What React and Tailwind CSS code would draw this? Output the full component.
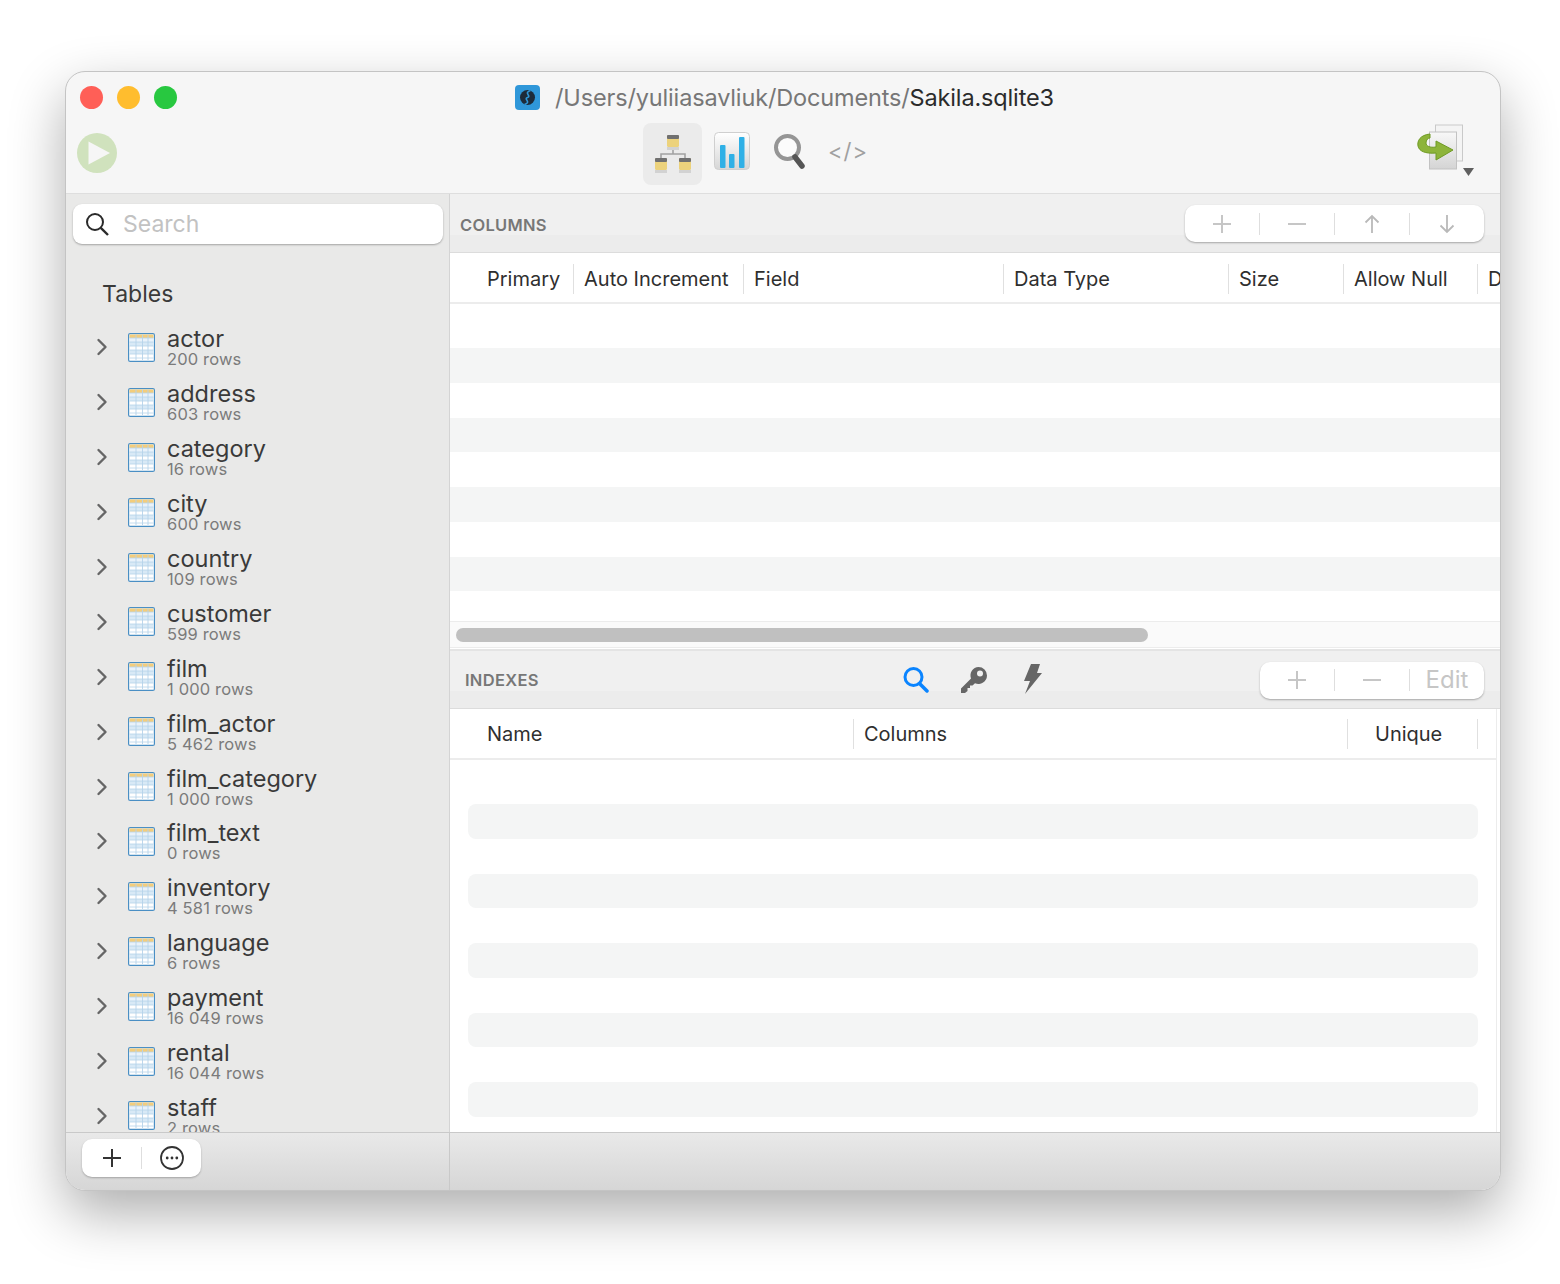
import React from "react";

const tables = [
  ["actor", "200 rows"], ["address", "603 rows"], ["category", "16 rows"], ["city", "600 rows"],
  ["country", "109 rows"], ["customer", "599 rows"], ["film", "1 000 rows"], ["film_actor", "5 462 rows"],
  ["film_category", "1 000 rows"], ["film_text", "0 rows"], ["inventory", "4 581 rows"], ["language", "6 rows"],
  ["payment", "16 049 rows"], ["rental", "16 044 rows"], ["staff", "2 rows"],
];

function TableIcon() {
  return (
    <svg width="27" height="29" viewBox="0 0 27 29" className="shrink-0">
      <rect x="0.6" y="0.6" width="25.8" height="27.8" rx="1.5" fill="#fff" stroke="#4a8fc4" strokeWidth="1.2" />
      <rect x="1.5" y="1.5" width="24" height="3.5" fill="#f3cd7c" />
      <rect x="1.5" y="9" width="24" height="4" fill="#d8e9f6" />
      <rect x="1.5" y="17" width="24" height="4" fill="#d8e9f6" />
      <rect x="1.5" y="5" width="24" height="4" fill="#e9f2fa" />
      <path d="M1.5 5H25.5M1.5 9H25.5M1.5 13H25.5M1.5 17H25.5M1.5 21H25.5M1.5 25H25.5" stroke="#b5d3ea" strokeWidth="0.8" />
      <path d="M8 2V27M14.5 2V27M20 2V27" stroke="#b5d3ea" strokeWidth="0.9" />
    </svg>
  );
}

function Chevron() {
  return (
    <svg width="12" height="18" viewBox="0 0 12 18" className="shrink-0">
      <path d="M2.5 2L9.5 9L2.5 16" fill="none" stroke="#666" strokeWidth="2.4" strokeLinecap="round" strokeLinejoin="round" />
    </svg>
  );
}

function Sep() {
  return <span className="h-[22px] w-px shrink-0 bg-[#dedede]" />;
}

function Plus({ color = "#c6c6c6" }) {
  return (
    <svg width="20" height="20" viewBox="0 0 20 20">
      <path d="M10 1V19M1 10H19" stroke={color} strokeWidth="2" />
    </svg>
  );
}

function Minus() {
  return (
    <svg width="20" height="20" viewBox="0 0 20 20">
      <path d="M1 10H19" stroke="#c6c6c6" strokeWidth="2" />
    </svg>
  );
}

function Arrow({ down }) {
  return (
    <svg width="16" height="20" viewBox="0 0 16 20" className={down ? "rotate-180" : ""}>
      <path d="M8 19V2M1.5 8.5L8 2L14.5 8.5" fill="none" stroke="#b9b9b9" strokeWidth="1.8" />
    </svg>
  );
}

function Head({ w, pl = 10, children, sep = true, className = "" }) {
  return (
    <div className={"flex h-full shrink-0 items-center " + className} style={{ width: w, paddingLeft: pl }}>
      <span className="text-[20px] whitespace-nowrap text-[#2f2f2f]">{children}</span>
      {sep && <span className="ml-auto h-[30px] w-px shrink-0 bg-[#e0e0e0]" />}
    </div>
  );
}

function SchemaIcon() {
  return (
    <svg width="38" height="40" viewBox="0 0 38 40">
      <path d="M19 12V20M7 27V20H31V27" fill="none" stroke="#a3a3a3" strokeWidth="1.6" />
      {[[13, 0], [1, 23], [25, 23]].map(([x, y]) => (
        <g key={x}>
          <rect x={x} y={y + 1} width="12" height="12" rx="1.5" fill="#ecd27c" />
          <rect x={x} y={y + 1} width="12" height="4" rx="1" fill="#707070" />
          <rect x={x} y={y + 13} width="12" height="3" fill="#d2d2d2" />
        </g>
      ))}
    </svg>
  );
}

function ChartIcon() {
  return (
    <svg width="36" height="40" viewBox="0 0 36 40">
      <defs>
        <linearGradient id="chartbg" x1="0" y1="0" x2="0" y2="1">
          <stop offset="0" stopColor="#ffffff" />
          <stop offset="1" stopColor="#d6d6d6" />
        </linearGradient>
      </defs>
      <rect x="0.5" y="0.5" width="35" height="37" rx="4" fill="url(#chartbg)" stroke="#cfcfcf" />
      <rect x="6" y="13" width="5.5" height="23" rx="1" fill="#2fb0e6" />
      <rect x="15" y="22" width="5.5" height="14" rx="1" fill="#2fb0e6" />
      <rect x="25" y="5" width="5.5" height="31" rx="1" fill="#2fb0e6" />
    </svg>
  );
}

function GlassIcon() {
  return (
    <svg width="32" height="36" viewBox="0 0 32 36">
      <circle cx="13.5" cy="13.5" r="11.5" fill="#fbfbfb" stroke="#959595" strokeWidth="4" />
      <path d="M21 23L28 32" stroke="#555" strokeWidth="5.5" strokeLinecap="round" />
    </svg>
  );
}

function ExportIcon() {
  return (
    <svg width="60" height="56" viewBox="0 0 60 56">
      <rect x="18.5" y="1" width="27" height="36" fill="#f4f4f4" stroke="#c9c9c9" />
      <defs>
        <linearGradient id="pagebg" x1="0" y1="0" x2="0" y2="1">
          <stop offset="0" stopColor="#f8f8f8" />
          <stop offset="1" stopColor="#d4d4d4" />
        </linearGradient>
      </defs>
      <rect x="12.5" y="8" width="27" height="37" fill="url(#pagebg)" stroke="#c2c2c2" />
      <path d="M13 10C3 11 0 17 1 22C2 27 8 30 19 29V36L36 26L19 17V23C13 24 9 22 9 19C9 16 11 14 13 14Z" fill="#8db43a" stroke="#6f9a25" strokeWidth="1" />
      <path d="M46 44H57L51.5 52Z" fill="#5f5f5f" />
    </svg>
  );
}

function PlayIcon() {
  return (
    <svg width="40" height="40" viewBox="0 0 40 40">
      <circle cx="20" cy="20" r="20" fill="#d0e2bd" />
      <path d="M11.5 8.5V31.5L33 20Z" fill="#f6f6f6" />
    </svg>
  );
}

function AppIcon() {
  return (
    <svg width="25" height="25" viewBox="0 0 25 25">
      <rect width="25" height="25" rx="4" fill="#2f97d9" />
      <circle cx="12.5" cy="12.5" r="7.5" fill="#1d2b3a" />
      <path d="M15.5 5.5C8 8 17 11 12.5 12.5C8 14 17 17 9.5 19.5" fill="none" stroke="#2f97d9" strokeWidth="1.6" />
    </svg>
  );
}

function SearchGlass() {
  return (
    <svg width="24" height="24" viewBox="0 0 24 24">
      <circle cx="10" cy="10" r="8" fill="none" stroke="#2a2a2a" strokeWidth="2" />
      <path d="M15.8 15.8L23 23" stroke="#2a2a2a" strokeWidth="2.4" />
    </svg>
  );
}

export default function App() {
  return (
    <div className="h-[1284px] bg-white pl-[65px] pt-[71px]" style={{ fontFamily: "Inter, 'Liberation Sans', sans-serif" }}>
      <div className="flex h-[1120px] w-[1436px] flex-col overflow-hidden rounded-[20px] border border-[#c4c4c4] bg-[#f6f6f6] shadow-[0_22px_55px_rgba(0,0,0,0.32)]">
        {/* title bar */}
        <div className="flex h-[51px] shrink-0 items-center">
          <div className="ml-[14px] flex w-[97px] justify-between">
            <span className="h-[23px] w-[23px] rounded-full bg-[#ff5f57]" />
            <span className="h-[23px] w-[23px] rounded-full bg-[#ffbd2e]" />
            <span className="h-[23px] w-[23px] rounded-full bg-[#28c840]" />
          </div>
          <div className="ml-[338px] flex items-center">
            <AppIcon />
            <span className="ml-[15px] text-[23.5px] leading-none tracking-[-0.15px] whitespace-nowrap text-[#777]">
              /Users/yuliiasavliuk/Documents/<span className="text-[#2b2b2b]">Sakila.sqlite3</span>
            </span>
          </div>
        </div>
        {/* toolbar */}
        <div className="flex h-[71px] shrink-0 items-start border-b border-[#dedede]">
          <div className="ml-[11px] mt-[10px]"><PlayIcon /></div>
          <div className="ml-[526px] flex items-start">
            <div className="flex h-[62px] w-[59px] items-center justify-center rounded-[8px] bg-[#ebebeb]"><SchemaIcon /></div>
            <div className="ml-[12px] mt-[9px]"><ChartIcon /></div>
            <div className="ml-[24px] mt-[11px]"><GlassIcon /></div>
            <span className="ml-[22px] mt-[14px] text-[22px] leading-[28px] tracking-[1px] text-[#a0a0a0]">&lt;/&gt;</span>
          </div>
          <div className="ml-auto mr-[23px] mt-[1px]"><ExportIcon /></div>
        </div>
        {/* body */}
        <div className="flex min-h-0 flex-1">
          <aside className="flex w-[383px] shrink-0 flex-col overflow-hidden bg-[#e9e9e8]">
            <div className="ml-[7px] mr-[6px] mt-[10px] flex h-[40px] shrink-0 items-center rounded-[9px] bg-white pl-[12px] shadow-[0_1px_2px_rgba(0,0,0,0.3)]">
              <SearchGlass />
              <span className="ml-[14px] text-[23px] text-[#c2c2c2]">Search</span>
            </div>
            <div className="ml-[36px] mt-[36px] shrink-0 text-[23px] leading-[28px] text-[#3a3a3a]">Tables</div>
            <div className="mt-[12px] min-h-0 flex-1 overflow-hidden">
              {tables.map(([n, r]) => (
                <div key={n} className="flex h-[54.9px] items-center pl-[30px]">
                  <Chevron />
                  <div className="ml-[20px]"><TableIcon /></div>
                  <div className="ml-[12px] mt-[3px]">
                    <div className="text-[23.5px] leading-[20px] text-[#3a3a3a]">{n}</div>
                    <div className="mt-[1px] text-[16.5px] leading-[18px] tracking-[0.15px] text-[#7b7b7b]">{r}</div>
                  </div>
                </div>
              ))}
            </div>
          </aside>
          <main className="flex min-w-0 flex-1 flex-col border-l border-[#d4d4d4] bg-white">
            {/* columns header */}
            <div className="flex h-[59px] shrink-0 items-center justify-between border-b border-[#dcdcdc] bg-[linear-gradient(#f0f0f0_70%,#ececec_70%)] pl-[10px] pr-[16px]">
              <span className="mt-[4px] text-[16.5px] font-semibold tracking-[0.3px] text-[#777]">COLUMNS</span>
              <div className="mt-[1px] flex h-[37px] w-[299px] items-center rounded-[10px] bg-white shadow-[0_1px_2px_rgba(0,0,0,0.3)]">
                <span className="flex w-[74px] justify-center"><Plus /></span><Sep />
                <span className="flex w-[74px] justify-center"><Minus /></span><Sep />
                <span className="flex w-[74px] justify-center"><Arrow /></span><Sep />
                <span className="flex w-[74px] justify-center"><Arrow down /></span>
              </div>
            </div>
            <div className="flex h-[51px] shrink-0 items-center overflow-hidden border-b-2 border-[#ececec] pt-[2px]">
              <Head w={124} pl={37}>Primary</Head>
              <Head w={170}>Auto Increment</Head>
              <Head w={260}>Field</Head>
              <Head w={225}>Data Type</Head>
              <Head w={115}>Size</Head>
              <Head w={134}>Allow Null</Head>
              <Head w={24} sep={false} className="overflow-hidden">D</Head>
            </div>
            <div className="h-[317px] shrink-0 overflow-hidden">
              <div className="h-[44px]" />
              {[0, 1, 2, 3].map((i) => (
                <div key={i}>
                  <div className="h-[34.75px] bg-[#f4f5f5]" />
                  <div className="h-[34.75px]" />
                </div>
              ))}
            </div>
            {/* scroll */}
            <div className="flex h-[27px] shrink-0 items-center border-y border-[#ececec] bg-[#fafafa] pl-[6px]">
              <div className="h-[14px] w-[692px] rounded-full bg-[#c0c0c0]" />
            </div>
            {/* indexes header */}
            <div className="mt-[1px] flex h-[60px] shrink-0 items-center border-b border-[#dcdcdc] border-t-2 border-t-[#e4e4e4] bg-[linear-gradient(#f0f0f0_70%,#ececec_70%)] pl-[15px] pr-[16px]">
              <span className="mt-[2px] text-[16.5px] font-semibold tracking-[0.3px] text-[#777]">INDEXES</span>
              <div className="ml-[364px] mt-[4px] flex items-center">
                <svg width="26" height="28" viewBox="0 0 26 28" className="-mt-[4px]">
                  <circle cx="10.5" cy="11" r="8.5" fill="none" stroke="#0a84ff" strokeWidth="3" />
                  <path d="M16.5 17.5L24 25" stroke="#0a84ff" strokeWidth="3.5" strokeLinecap="round" />
                </svg>
                <svg width="28" height="28" viewBox="0 0 28 28" className="-mt-[4px] ml-[31px]">
                  <path d="M18.5 1A8.5 8.5 0 0 1 27 9.5A8.5 8.5 0 0 1 15 17.2L12.5 19.5H10V22H7.5V25L5 27H1V22.5L11 12.5A8.5 8.5 0 0 1 18.5 1Z" fill="#666" />
                  <circle cx="20" cy="7.5" r="3" fill="#f0f0f0" />
                </svg>
                <svg width="18" height="30" viewBox="0 0 18 30" className="-mt-[6px] ml-[36px]">
                  <path d="M7 0H16L13 9H18L1 30L6 17H0Z" fill="#666" />
                </svg>
              </div>
              <div className="ml-auto mt-[1px] flex h-[37px] w-[224px] items-center rounded-[10px] bg-white text-[24px] text-[#c6c6c6] shadow-[0_1px_2px_rgba(0,0,0,0.3)]">
                <span className="flex w-[74px] justify-center"><Plus /></span><Sep />
                <span className="flex w-[74px] justify-center"><Minus /></span><Sep />
                <span className="flex w-[74px] justify-center leading-none">Edit</span>
              </div>
            </div>
            <div className="mr-[3px] flex min-h-0 flex-1 flex-col overflow-hidden border-r border-[#ececec]">
              <div className="flex h-[51px] shrink-0 items-center border-b-2 border-[#ececec]">
                <Head w={404} pl={37}>Name</Head>
                <Head w={494}>Columns</Head>
                <Head w={130} pl={27}>Unique</Head>
              </div>
              <div className="px-[18px] pt-[44px]">
                {[0, 1, 2, 3, 4].map((i) => (
                  <div key={i} className="mb-[34.75px] h-[34.75px] w-[1010px] rounded-[8px] bg-[#f4f5f5]" />
                ))}
              </div>
            </div>
          </main>
        </div>
        {/* bottom bar */}
        <div className="flex h-[58px] shrink-0 border-t border-[#c9c9c9] bg-[linear-gradient(#e9e9e9,#d6d6d6)]">
          <div className="flex w-[384px] shrink-0 items-start border-r border-[#c9c9c9] pl-[16px] pt-[6px]">
            <div className="flex h-[38px] w-[119px] items-center rounded-[10px] bg-white shadow-[0_1px_2px_rgba(0,0,0,0.25)]">
              <span className="flex w-[59px] justify-center"><Plus color="#333" /></span>
              <Sep />
              <span className="flex w-[59px] justify-center">
                <svg width="24" height="24" viewBox="0 0 24 24">
                  <circle cx="12" cy="12" r="11" fill="none" stroke="#333" strokeWidth="1.8" />
                  <circle cx="7.2" cy="12" r="1.4" fill="#333" />
                  <circle cx="12" cy="12" r="1.4" fill="#333" />
                  <circle cx="16.8" cy="12" r="1.4" fill="#333" />
                </svg>
              </span>
            </div>
          </div>
        </div>
      </div>
    </div>
  );
}
